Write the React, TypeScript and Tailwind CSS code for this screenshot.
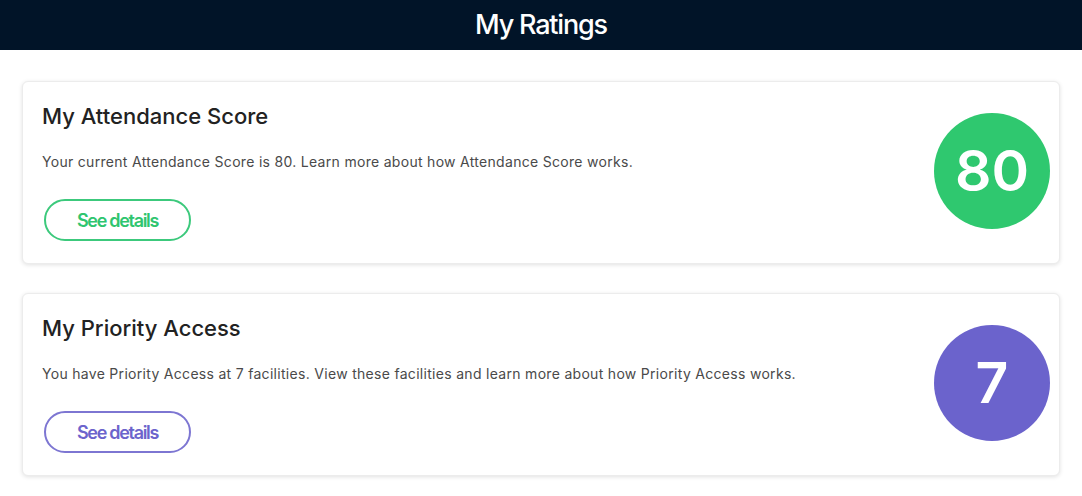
export default function App() {
  const cards = [
    {
      title: "My Attendance Score",
      text: "Your current Attendance Score is 80. Learn more about how Attendance Score works.",
      value: "80",
      ring: "border-[#3cc97c] text-[#2fc56f]",
      circle: "bg-[#2fc86f]",
    },
    {
      title: "My Priority Access",
      text: "You have Priority Access at 7 facilities. View these facilities and learn more about how Priority Access works.",
      value: "7",
      ring: "border-[#7d76d2] text-[#6c64cc]",
      circle: "bg-[#6b63cc]",
    },
  ];

  return (
    <div className="min-h-screen bg-white font-['Inter','Liberation_Sans',sans-serif]">
      <header className="flex h-[50px] items-center justify-center bg-[#011428]">
        <h1 className="text-[27px] font-medium tracking-[-1.2px] text-white">My Ratings</h1>
      </header>
      <main className="flex flex-col gap-[29px] px-[22px] pt-[31px]">
        {cards.map((card) => (
          <section
            key={card.title}
            className="flex h-[183px] items-start justify-between rounded-md border border-[#ececec] bg-white pl-[19px] pr-[9px] shadow-[0_1px_4px_rgba(0,0,0,0.12)]"
          >
            <div className="flex flex-col pt-[20px]">
              <h2 className="text-[22px] font-medium leading-[28px] text-[#222]">{card.title}</h2>
              <p className="mt-[22px] text-[14px] leading-[20px] tracking-[0.3px] text-[#4a4a4a]">{card.text}</p>
              <button
                type="button"
                className={`mt-[27px] ml-[2px] h-[42px] w-[147px] rounded-full border-2 bg-white text-[18px] font-semibold tracking-[-1.3px] ${card.ring}`}
              >
                See details
              </button>
            </div>
            <div
              className={`mt-[31px] flex h-[116px] w-[116px] items-center justify-center rounded-full text-[57px] font-semibold text-white ${card.circle}`}
            >
              {card.value}
            </div>
          </section>
        ))}
      </main>
    </div>
  );
}
